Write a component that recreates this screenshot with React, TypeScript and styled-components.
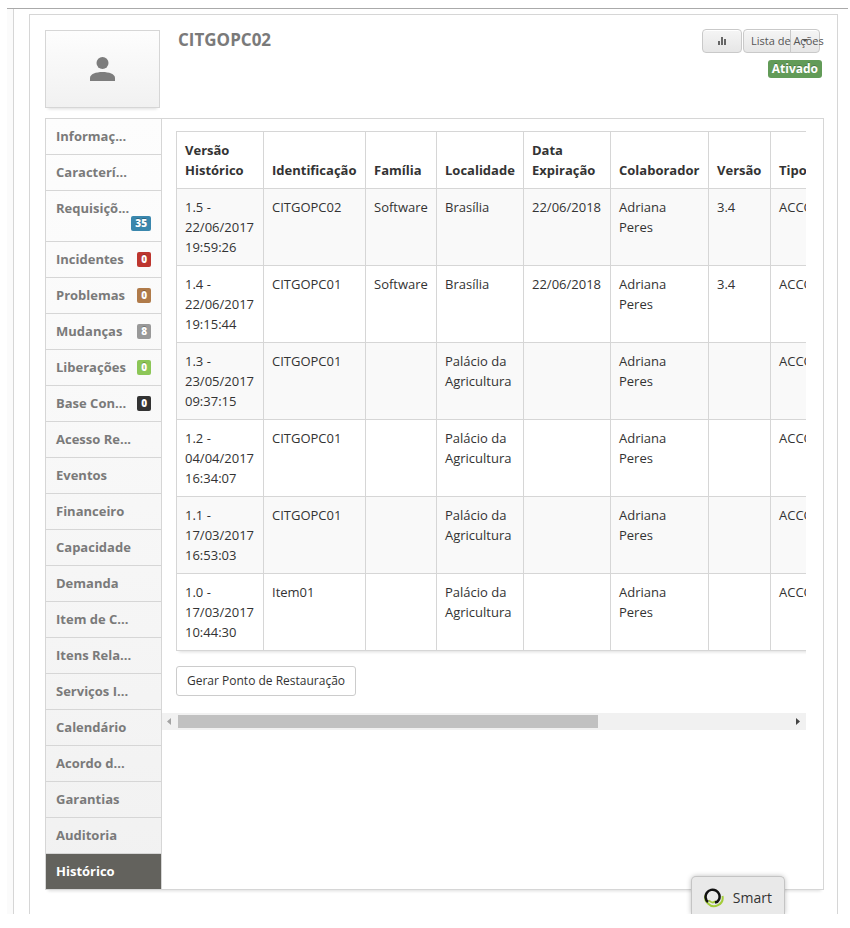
import React from "react";
import styled, { createGlobalStyle } from "styled-components";

const line = "#d6d6d6";

const GlobalStyle = createGlobalStyle`
  * { box-sizing: border-box; }
  body {
    margin: 0;
    background: #fff;
    color: #333;
    font: 13px/20px "Open Sans", sans-serif;
  }
  button { font-family: inherit; color: inherit; cursor: pointer; }
`;

const Page = styled.div`
  position: relative;
  margin: 8px 2px 14px 7px;
  padding-left: 6px;
  border-top: 1px solid #aaa;
  background: #fbfbfb;
  overflow: hidden;
`;

const Content = styled.div`
  padding: 5px 10px 0 15px;
  border-left: 1px solid ${line};
  background: #fff;
`;

const Card = styled.section`
  padding: 15px 13px 24px 15px;
  border: 1px solid ${line};
  border-bottom: 0;
`;

const Header = styled.header`
  display: flex;
  align-items: flex-start;
  margin-bottom: 10px;
`;

const Avatar = styled.div`
  display: flex;
  align-items: center;
  justify-content: center;
  width: 115px;
  height: 78px;
  border: 1px solid ${line};
  background: linear-gradient(#fdfdfd, #f1f1f1);
  box-shadow: 0 4px 3px -3px #ddd;
`;

const Title = styled.h1`
  flex: 1;
  margin: 0 0 0 18px;
  color: #7a7a7a;
  font-size: 17px;
  line-height: 20px;
  font-weight: 700;
`;

const Actions = styled.div`
  display: flex;
  flex-direction: column;
  align-items: flex-end;
  gap: 7px;
  margin: -1px 2px 0 0;
`;

const ButtonRow = styled.div`
  display: flex;
  margin-right: 2px;
`;

const ToolButton = styled.button<{ $width: number; $part?: "start" | "end" }>`
  display: flex;
  align-items: center;
  justify-content: ${(p) => (p.$part === "start" ? "flex-start" : "center")};
  width: ${(p) => p.$width}px;
  height: 24px;
  margin-left: ${(p) => (p.$part === "start" ? 1 : p.$part === "end" ? -1 : 0)}px;
  padding: 0 ${(p) => (p.$part === "start" ? 7 : 0)}px;
  border: 1px solid #c9c9c9;
  border-radius: ${(p) => (p.$part === "start" ? "4px 0 0 4px" : p.$part === "end" ? "0 4px 4px 0" : "4px")};
  background: linear-gradient(#f5f5f5, #e6e6e6);
  box-shadow: inset 0 1px 0 #fff;
  color: #555;
  font-size: 11px;
  line-height: 20px;
  white-space: nowrap;
`;

const ButtonText = styled.span`
  position: relative;
  z-index: 1;
`;

const Status = styled.span`
  padding: 0 4px;
  border-radius: 3px;
  background: #629b58;
  color: #fff;
  font-size: 12px;
  line-height: 18px;
  font-weight: 700;
  text-shadow: 0 -1px 0 rgba(0, 0, 0, 0.25);
`;

const Body = styled.div`
  display: grid;
  grid-template-columns: 116px minmax(0, 1fr);
  border: 1px solid ${line};
  box-shadow: 0 4px 3px -3px #ddd;
`;

const Sidebar = styled.nav`
  border-right: 1px solid ${line};
  background: linear-gradient(#fdfdfd, #f1f1f1);
`;

const Count = styled.span<{ $color: string }>`
  padding: 0 4px;
  border-radius: 2px;
  background: ${(p) => p.$color};
  color: #fff;
  font-size: 10px;
  line-height: 15px;
  font-weight: 800;
  text-shadow: 0 -1px 0 rgba(0, 0, 0, 0.25);
`;

const NavItem = styled.a<{ $active?: boolean; $stacked?: boolean }>`
  display: flex;
  flex-direction: ${(p) => (p.$stacked ? "column" : "row")};
  justify-content: space-between;
  align-items: ${(p) => (p.$stacked ? "stretch" : "center")};
  padding: ${(p) => (p.$stacked ? "7px 10px 10px" : "7px 10px 8px")};
  border-bottom: ${(p) => (p.$active ? "0" : `1px solid ${line}`)};
  background: ${(p) => (p.$active ? "#63625d" : "transparent")};
  color: ${(p) => (p.$active ? "#fff" : "#7a7a7a")};
  font-weight: 700;
  text-decoration: none;
  white-space: nowrap;

  ${Count} {
    align-self: ${(p) => (p.$stacked ? "flex-end" : "center")};
    margin-top: ${(p) => (p.$stacked ? "-2px" : "0")};
  }
`;

const Main = styled.main`
  margin-right: 17px;
`;

const Viewport = styled.div`
  padding: 12px 0 17px 14px;
  overflow: hidden;
`;

const Table = styled.table`
  width: 720px;
  table-layout: fixed;
  border-collapse: collapse;
  box-shadow: 0 4px 3px -3px #ddd;

  th,
  td {
    padding: 8px;
    border: 1px solid ${line};
    text-align: left;
    vertical-align: top;
  }
  th {
    vertical-align: bottom;
    font-weight: 700;
  }
  tbody tr:nth-child(odd) {
    background: #f9f9f9;
  }
`;

const Restore = styled.button`
  display: block;
  height: 30px;
  margin-top: 15px;
  padding: 0 10px;
  border: 1px solid #ccc;
  border-radius: 3px;
  background: #fff;
  font-size: 12px;
  line-height: 20px;
`;

const ScrollBar = styled.div`
  display: flex;
  align-items: center;
  height: 17px;
  background: #f1f1f1;
`;

const Arrow = styled.svg`
  flex: none;
  width: 16px;
  height: 17px;
`;

const Track = styled.div`
  flex: 1;
`;

const Thumb = styled.div`
  width: 68.6%;
  height: 13px;
  background: #c1c1c1;
`;

const Smart = styled.button`
  position: absolute;
  right: 63px;
  bottom: 0;
  display: flex;
  align-items: center;
  gap: 9px;
  height: 38px;
  padding: 4px 12px 0;
  border: 1px solid #c4c4c4;
  border-bottom: 0;
  border-radius: 5px 5px 0 0;
  background: #e9e9e9;
  box-shadow: 0 0 5px rgba(0, 0, 0, 0.25);
  font-size: 14px;
  line-height: 20px;
`;

type Item = { label: string; count?: number; color?: string; stacked?: boolean };

const items: Item[] = [
  { label: "Informaç..." },
  { label: "Caracterí..." },
  { label: "Requisiçõ...", count: 35, color: "#3a87ad", stacked: true },
  { label: "Incidentes", count: 0, color: "#bd362f" },
  { label: "Problemas", count: 0, color: "#b07b4a" },
  { label: "Mudanças", count: 8, color: "#999999" },
  { label: "Liberações", count: 0, color: "#8cc657" },
  { label: "Base Con...", count: 0, color: "#333333" },
  { label: "Acesso Re..." },
  { label: "Eventos" },
  { label: "Financeiro" },
  { label: "Capacidade" },
  { label: "Demanda" },
  { label: "Item de C..." },
  { label: "Itens Rela..." },
  { label: "Serviços I..." },
  { label: "Calendário" },
  { label: "Acordo d..." },
  { label: "Garantias" },
  { label: "Auditoria" },
  { label: "Histórico" },
];

const columns = [
  { name: "Versão Histórico", width: 87 },
  { name: "Identificação", width: 102 },
  { name: "Família", width: 71 },
  { name: "Localidade", width: 87 },
  { name: "Data Expiração", width: 87 },
  { name: "Colaborador", width: 98 },
  { name: "Versão", width: 62 },
  { name: "Tipo", width: 126 },
];

const Col = styled.col<{ $width: number }>`
  width: ${(p) => p.$width}px;
`;

const rows = [
  ["1.5 - 22/06/2017 19:59:26", "CITGOPC02", "Software", "Brasília", "22/06/2018", "Adriana Peres", "3.4", "ACCOUNT"],
  ["1.4 - 22/06/2017 19:15:44", "CITGOPC01", "Software", "Brasília", "22/06/2018", "Adriana Peres", "3.4", "ACCOUNT"],
  ["1.3 - 23/05/2017 09:37:15", "CITGOPC01", "", "Palácio da Agricultura", "", "Adriana Peres", "", "ACCOUNT"],
  ["1.2 - 04/04/2017 16:34:07", "CITGOPC01", "", "Palácio da Agricultura", "", "Adriana Peres", "", "ACCOUNT"],
  ["1.1 - 17/03/2017 16:53:03", "CITGOPC01", "", "Palácio da Agricultura", "", "Adriana Peres", "", "ACCOUNT"],
  ["1.0 - 17/03/2017 10:44:30", "Item01", "", "Palácio da Agricultura", "", "Adriana Peres", "", "ACCOUNT"],
];

export default function App() {
  return (
    <>
      <GlobalStyle />
      <Page>
        <Content>
          <Card>
            <Header>
              <Avatar>
                <svg width="25" height="26" viewBox="0 0 25 26" fill="#7d7d7d" aria-hidden="true">
                  <circle cx="12.500" cy="7" r="6" />
                  <path d="M0 25v-3c0-4 6-6 12.500-6S25 18 25 22v3z" />
                </svg>
              </Avatar>
              <Title>CITGOPC02</Title>
              <Actions>
                <ButtonRow>
                  <ToolButton type="button" $width={40} aria-label="Gráfico">
                    <svg width="8" height="8" viewBox="0 0 8 8" fill="#666" aria-hidden="true">
                      <path d="M0 4h2v4H0zM3 0h2v8H3zM6 2h2v6H6z" />
                    </svg>
                  </ToolButton>
                  <ToolButton type="button" $width={48} $part="start">
                    <ButtonText>Lista de Ações</ButtonText>
                  </ToolButton>
                  <ToolButton type="button" $width={30} $part="end" aria-label="Abrir menu">
                    <svg width="6" height="4" viewBox="0 0 6 4" fill="#555" aria-hidden="true">
                      <path d="M0 0h6L3 3z" />
                    </svg>
                  </ToolButton>
                </ButtonRow>
                <Status>Ativado</Status>
              </Actions>
            </Header>
            <Body>
              <Sidebar>
                {items.map((item) => (
                  <NavItem
                    key={item.label}
                    href="#"
                    $stacked={item.stacked}
                    $active={item.label === "Histórico"}
                  >
                    {item.label}
                    {item.color && <Count $color={item.color}>{item.count}</Count>}
                  </NavItem>
                ))}
              </Sidebar>
              <Main>
                <Viewport>
                  <Table>
                    <colgroup>
                      {columns.map((c) => (
                        <Col key={c.name} $width={c.width} />
                      ))}
                    </colgroup>
                    <thead>
                      <tr>
                        {columns.map((c) => (
                          <th key={c.name} scope="col">{c.name}</th>
                        ))}
                      </tr>
                    </thead>
                    <tbody>
                      {rows.map((row) => (
                        <tr key={row[0]}>
                          {row.map((cell, i) => (
                            <td key={i}>{cell}</td>
                          ))}
                        </tr>
                      ))}
                    </tbody>
                  </Table>
                  <Restore type="button">Gerar Ponto de Restauração</Restore>
                </Viewport>
                <ScrollBar aria-hidden="true">
                  <Arrow viewBox="0 0 16 17" fill="#a3a3a3">
                    <path d="M9 5v7L5 8.500z" />
                  </Arrow>
                  <Track>
                    <Thumb />
                  </Track>
                  <Arrow viewBox="0 0 16 17" fill="#444">
                    <path d="M6 5v7l4-3.500z" />
                  </Arrow>
                </ScrollBar>
              </Main>
            </Body>
          </Card>
        </Content>
        <Smart type="button">
          <svg width="20" height="20" viewBox="0 0 20 20" fill="none" aria-hidden="true">
            <path d="M18.500 8A8.500 8.500 0 0 1 4 15.500A8 8 0 0 1 1.500 7" stroke="#a4cd39" strokeWidth="2" />
            <path d="M5 12c1 3 5 3 7 1" stroke="#a4cd39" strokeWidth="2" />
            <path d="M4 14A7 7 0 1 1 15 11.500Q14 14 11 14.500" stroke="#111" strokeWidth="2.500" />
          </svg>
          Smart
        </Smart>
      </Page>
    </>
  );
}
